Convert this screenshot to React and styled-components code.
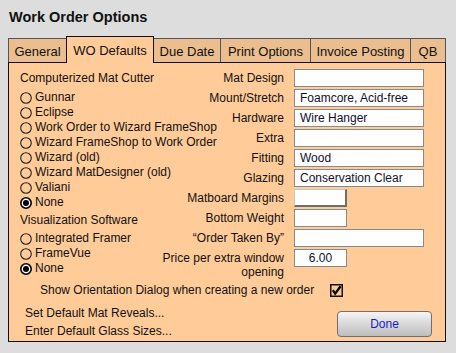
import React from "react";
import styled, { createGlobalStyle } from "styled-components";

const Global = createGlobalStyle`
  html, body { margin: 0; padding: 0; background: #dddddd; }
  body { font-family: "Liberation Sans", Arial, sans-serif; color: #111; }
  * { box-sizing: border-box; }
`;

const Window = styled.div`
  width: 456px;
  height: 353px;
  padding: 0 10px 0 8px;
  background: #dddddd;
`;

const Title = styled.div`
  font-weight: bold;
  font-size: 14.5px;
  line-height: 17px;
  padding: 9px 0 0 1px;
  margin-bottom: 10px;
  color: #111;
`;

const TabBar = styled.div`
  display: flex;
  align-items: flex-end;
  height: 26px;
`;

const Tab = styled.div`
  flex: none;
  width: ${(p) => p.$w}px;
  display: flex;
  align-items: center;
  justify-content: center;
  font-size: 13px;
  white-space: nowrap;
  color: #111;
  border: 1px solid ${(p) => (p.$active ? "#111" : "#555")};
  border-bottom: none;
  margin-left: -1px;
  &:first-child { margin-left: 0; }
  background: ${(p) => (p.$active ? "#ffcc99" : "#ebbe8f")};
  height: ${(p) => (p.$active ? "27px" : "24px")};
  margin-bottom: ${(p) => (p.$active ? "-1px" : "0")};
  padding-top: ${(p) => (p.$active ? "0" : "1px")};
  position: ${(p) => (p.$active ? "relative" : "static")};
  z-index: ${(p) => (p.$active ? 1 : "auto")};
`;

const Panel = styled.div`
  height: 280px;
  background: #ffcc99;
  border: 1px solid #111;
  padding: 6px 13px 0 11px;
  font-size: 12px;
`;

const Upper = styled.div`
  display: flex;
`;

const LeftCol = styled.div`
  width: 140px;
  flex: none;
  white-space: nowrap;
`;

const Heading = styled.div`
  line-height: 18px;
  margin-top: ${(p) => p.$mt || 0}px;
`;

const RadioList = styled.div`
  margin-top: ${(p) => p.$mt || 0}px;
  display: flex;
  flex-direction: column;
`;

const RadioRow = styled.div`
  display: flex;
  align-items: center;
  gap: 3px;
  height: 15px;
  line-height: 15px;
`;

const RightCol = styled.div`
  display: grid;
  grid-template-columns: 124px 130px;
  column-gap: 10px;
  row-gap: 2px;
  align-items: start;
`;

const Label = styled.div`
  text-align: right;
  line-height: 14px;
  padding-top: 2px;
`;

const Field = styled.div`
  width: ${(p) => (p.$narrow ? "53px" : "130px")};
  height: 18px;
  background: #fff;
  border: 1px solid #8a8a8a;
  padding: 0 5px;
  line-height: 16px;
  font-size: 12px;
  color: #10102c;
  text-align: ${(p) => (p.$center ? "center" : "left")};
  white-space: nowrap;
  overflow: hidden;
`;

const MiniButton = styled.div`
  width: 53px;
  height: 18px;
  background: #fff;
  border-top: 1px solid #c8c8c8;
  border-left: 1px solid #c8c8c8;
  border-right: 2px solid #6e6e6e;
  border-bottom: 2px solid #6e6e6e;
`;

const CheckRow = styled.div`
  display: flex;
  align-items: center;
  gap: 16px;
  height: 14px;
  margin-top: 4px;
  padding-left: 20px;
  line-height: 14px;
`;

const Bottom = styled.div`
  display: flex;
  justify-content: space-between;
  align-items: flex-start;
  margin-top: 7px;
`;

const Links = styled.div`
  padding-left: 5px;
  display: flex;
  flex-direction: column;
`;

const LinkText = styled.div`
  line-height: 18px;
`;

const DoneButton = styled.div`
  margin-top: 7px;
  width: 95px;
  height: 26px;
  border: 1px solid #6f6f6f;
  border-radius: 4px;
  background: linear-gradient(#f5f5f5, #bdbdbd);
  color: #1a1acc;
  font-size: 12px;
  display: flex;
  align-items: center;
  justify-content: center;
`;

const Radio = ({ checked }) => (
  <svg width="12" height="12" viewBox="0 0 12 12" style={{ flex: "none" }}>
    {checked ? (
      <>
        <circle cx="6" cy="6" r="5.2" fill="#fff" stroke="#000" strokeWidth="1.6" />
        <circle cx="6" cy="6" r="3" fill="#000" />
      </>
    ) : (
      <circle cx="6" cy="6" r="5.3" fill="none" stroke="#222" strokeWidth="1.1" />
    )}
  </svg>
);

const Check = () => (
  <svg width="13" height="13" viewBox="0 0 13 13" style={{ flex: "none" }}>
    <rect x="0.75" y="0.75" width="11.5" height="11.5" fill="none" stroke="#111" strokeWidth="1.5" />
    <path d="M2.8 6.2 L5.2 9.6 L10.6 2.2" fill="none" stroke="#000" strokeWidth="2.3" strokeLinejoin="miter" />
  </svg>
);

const tabs = [
  { t: "General", w: 59 },
  { t: "WO Defaults", w: 88 },
  { t: "Due Date", w: 68 },
  { t: "Print Options", w: 91 },
  { t: "Invoice Posting", w: 101 },
  { t: "QB", w: 36 },
];
const cutters = [
  "Gunnar",
  "Eclipse",
  "Work Order to Wizard FrameShop",
  "Wizard FrameShop to Work Order",
  "Wizard (old)",
  "Wizard MatDesigner (old)",
  "Valiani",
  "None",
];
const vis = ["Integrated Framer", "FrameVue", "None"];

export default function App() {
  return (
    <>
      <Global />
      <Window>
        <Title>Work Order Options</Title>
        <TabBar>
          {tabs.map(({ t, w }) => (
            <Tab key={t} $w={w} $active={t === "WO Defaults"}>
              {t}
            </Tab>
          ))}
        </TabBar>
        <Panel>
          <Upper>
            <LeftCol>
              <Heading>Computerized Mat Cutter</Heading>
              <RadioList $mt={3}>
                {cutters.map((c, i) => (
                  <RadioRow key={c + i}>
                    <Radio checked={c === "None"} />
                    {c}
                  </RadioRow>
                ))}
              </RadioList>
              <Heading $mt={1}>Visualization Software</Heading>
              <RadioList $mt={2}>
                {vis.map((c) => (
                  <RadioRow key={c}>
                    <Radio checked={c === "None"} />
                    {c}
                  </RadioRow>
                ))}
              </RadioList>
            </LeftCol>
            <RightCol>
              <Label>Mat Design</Label>
              <Field />
              <Label>Mount/Stretch</Label>
              <Field>Foamcore, Acid-free</Field>
              <Label>Hardware</Label>
              <Field>Wire Hanger</Field>
              <Label>Extra</Label>
              <Field />
              <Label>Fitting</Label>
              <Field>Wood</Field>
              <Label>Glazing</Label>
              <Field>Conservation Clear</Field>
              <Label>Matboard Margins</Label>
              <MiniButton />
              <Label>Bottom Weight</Label>
              <Field $narrow />
              <Label>“Order Taken By”</Label>
              <Field />
              <Label>Price per extra window opening</Label>
              <Field $narrow $center>6.00</Field>
            </RightCol>
          </Upper>
          <CheckRow>
            <span>Show Orientation Dialog when creating a new order</span>
            <Check />
          </CheckRow>
          <Bottom>
            <Links>
              <LinkText>Set Default Mat Reveals...</LinkText>
              <LinkText>Enter Default Glass Sizes...</LinkText>
            </Links>
            <DoneButton>Done</DoneButton>
          </Bottom>
        </Panel>
      </Window>
    </>
  );
}
